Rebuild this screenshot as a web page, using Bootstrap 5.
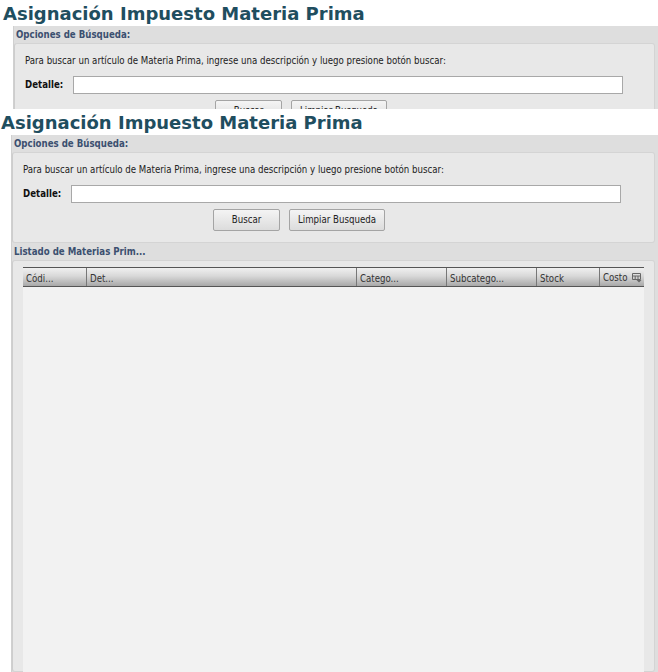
<!DOCTYPE html>
<html lang="en">
<head>
    <meta charset="UTF-8">
    <meta name="viewport" content="width=device-width, initial-scale=1.0">
    <title>Asignación Impuesto Materia Prima</title>
    <link href="https://cdn.jsdelivr.net/npm/bootstrap@5.3.0/dist/css/bootstrap.min.css" rel="stylesheet">
    <style>
        html, body { height: 672px; overflow: hidden; background: #fff; }
        body { font-family: "DejaVu Sans Condensed", "DejaVu Sans", sans-serif; font-stretch: condensed; font-size: 9.6px; color: #222; }
        .clip-top { height: 109px; overflow: hidden; padding-left: 2px; }
        .page-title { font-family: "DejaVu Sans", sans-serif; font-stretch: normal; font-size: 18px; line-height: 22px; font-weight: 700; color: #1f4e5f; margin: 0; padding: 3px 0 1px 1px; }
        .shell { margin-left: 11px; background: #dedede; border-left: 1px solid #d0d0d0; }
        .shell-head { height: 17px; line-height: 17px; padding-left: 2px; font-weight: 700; color: #3c5070; }
        .shell-body { margin-right: 3px; background: #e8e8e8; border: 1px solid #d4d4d4; border-left-color: #cdcdcd; border-radius: 3px; padding: 10px 10px 11px; }
        .hint { height: 22px; line-height: 14px; }
        .field-label { width: 48px; font-weight: 700; color: #111; }
        .field-input { width: 550px; height: 18px; padding: 0 3px; border: 1px solid #a8a8a8; border-radius: 0; background: #fff; }
        .btn-row { padding: 6px 0 0 190px; gap: 9px; }
        .plain-btn { height: 22px; padding: 1px 0 0; font-size: 9.6px; color: #222; background: linear-gradient(#f4f4f4, #dcdcdc); border: 1px solid #a4a4a4; border-radius: 2px; }
        .btn-search { width: 67px; }
        .btn-clear { width: 96px; }
        .list-body { height: 412px; padding: 6px 10px 0; }
        .grid-head { height: 20px; background: linear-gradient(#f0f0f0 0, #d8d8d8 45%, #a8a8a8 100%); border-top: 1px solid #555; border-bottom: 1px solid #555; }
        .grid-cell { padding-left: 3px; line-height: 21px; border-right: 1px solid #777; color: #333; white-space: nowrap; overflow: hidden; }
        .grid-cell:last-child { border-right: 0; padding-top: 1px; }
        .grid-rows { height: 385px; background: #f2f2f2; }
        .w-a { width: 64px; } .w-b { width: 270px; } .w-c { width: 90px; } .w-d { width: 90px; } .w-e { width: 63px; } .w-f { flex: 1; }
        .col-menu { flex: none; margin-left: 5px; }
    </style>
</head>
<body>
    <!-- first copy, cut off -->
    <div class="clip-top">
        <h1 class="page-title">Asignación Impuesto Materia Prima</h1>
        <div class="shell">
            <div class="shell-head">Opciones de Búsqueda:</div>
            <div class="shell-body">
                <div class="hint">Para buscar un artículo de Materia Prima, ingrese una descripción y luego presione botón buscar:</div>
                <div class="d-flex align-items-center">
                    <label class="field-label">Detalle:</label>
                    <input type="text" class="field-input">
                </div>
                <div class="d-flex btn-row">
                    <button type="button" class="btn plain-btn btn-search">Buscar</button>
                    <button type="button" class="btn plain-btn btn-clear">Limpiar Busqueda</button>
                </div>
            </div>
        </div>
    </div>

    <!-- second copy -->
    <h1 class="page-title">Asignación Impuesto Materia Prima</h1>
    <div class="shell">
        <div class="shell-head">Opciones de Búsqueda:</div>
        <div class="shell-body">
            <div class="hint">Para buscar un artículo de Materia Prima, ingrese una descripción y luego presione botón buscar:</div>
            <div class="d-flex align-items-center">
                <label class="field-label">Detalle:</label>
                <input type="text" class="field-input">
            </div>
            <div class="d-flex btn-row">
                <button type="button" class="btn plain-btn btn-search">Buscar</button>
                <button type="button" class="btn plain-btn btn-clear">Limpiar Busqueda</button>
            </div>
        </div>
        <div class="shell-head">Listado de Materias Prim...</div>
        <div class="shell-body list-body">
            <div class="d-flex grid-head">
                <div class="grid-cell w-a">Códi...</div>
                <div class="grid-cell w-b">Det...</div>
                <div class="grid-cell w-c">Catego...</div>
                <div class="grid-cell w-d">Subcatego...</div>
                <div class="grid-cell w-e">Stock</div>
                <div class="grid-cell w-f d-flex align-items-center">Costo
                    <svg class="col-menu" width="10" height="10" viewBox="0 0 10 10"><path d="M.5.5h8v6h-8zM.5 3h8M3.2 3v3.5M6 3v3.5" fill="none" stroke="#666"/><path d="M4.5 7h5L7 9.5z" fill="#666"/></svg>
                </div>
            </div>
            <div class="grid-rows"></div>
        </div>
    </div>

    <script src="https://cdn.jsdelivr.net/npm/bootstrap@5.3.0/dist/js/bootstrap.bundle.min.js"></script>
</body>
</html>
